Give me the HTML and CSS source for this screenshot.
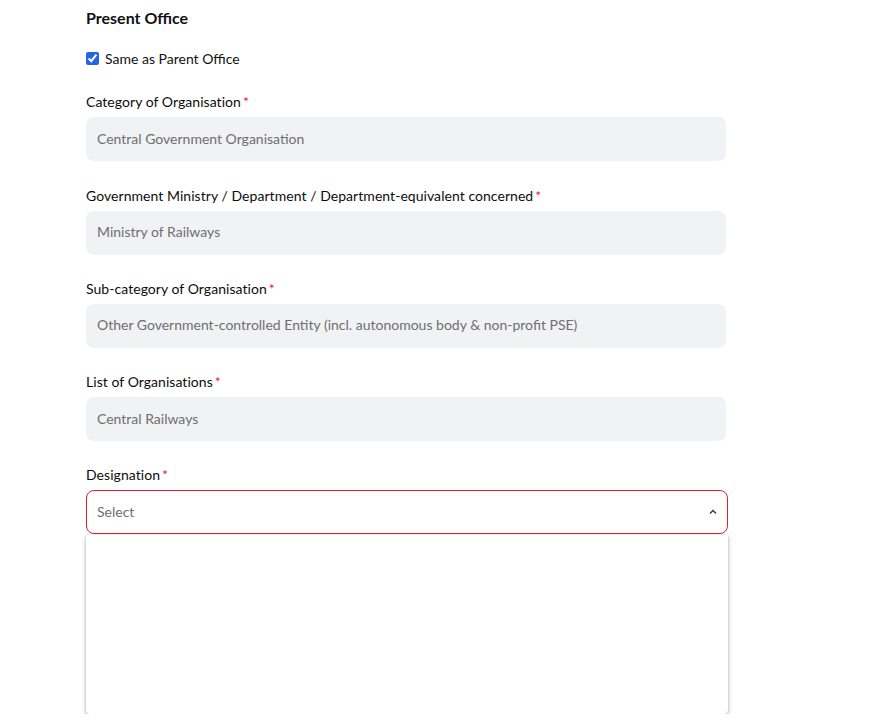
FILE: index.html
```html
<!DOCTYPE html>
<html>
<head>
<meta charset="utf-8">
<link rel="stylesheet" href="styles.css">
</head>
<body>
<div class="page">
  <h2 class="title">Present Office</h2>
  <label class="check">
    <input type="checkbox" checked>
    <span>Same as Parent Office</span>
  </label>

  <div class="field">
    <div class="label">Category of Organisation<span class="req">*</span></div>
    <div class="input">Central Government Organisation</div>
  </div>
  <div class="field">
    <div class="label">Government Ministry / Department / Department-equivalent concerned<span class="req">*</span></div>
    <div class="input">Ministry of Railways</div>
  </div>
  <div class="field">
    <div class="label">Sub-category of Organisation<span class="req">*</span></div>
    <div class="input">Other Government-controlled Entity (incl. autonomous body &amp; non-profit PSE)</div>
  </div>
  <div class="field">
    <div class="label">List of Organisations<span class="req">*</span></div>
    <div class="input">Central Railways</div>
  </div>
  <div class="field select-field">
    <div class="label">Designation<span class="req">*</span></div>
    <div class="select">
      <span>Select</span>
      <svg class="chev" width="8" height="6" viewBox="0 0 8 6"><path d="M1 4.5 L4 1.5 L7 4.5" fill="none" stroke="#333" stroke-width="1.3"/></svg>
    </div>
    <div class="menu"></div>
  </div>
</div>
</body>
</html>
```

FILE: styles.css
```css
html, body {
  margin: 0;
  padding: 0;
  background: #fff;
}
body {
  font-family: Lato, "Open Sans", sans-serif;
  color: #111;
  font-size: 14px;
}
.page {
  padding-left: 86px;
  padding-top: 8px;
  width: 642px;
}
.title {
  font-size: 16px;
  font-weight: 700;
  margin: 0;
  line-height: 20px;
  color: #111;
}
.check {
  display: flex;
  align-items: center;
  gap: 6px;
  margin-top: 20px;
  height: 20px;
  font-size: 14px;
}
.check input {
  margin: 0;
  width: 13px;
  height: 13px;
  accent-color: #2563eb;
}
.field {
  margin-top: 24.3px;
}
.label {
  line-height: 20px;
  font-size: 14px;
  margin-bottom: 5px;
  color: #0d0d0d;
  letter-spacing: 0.05px;
}
.req {
  color: #e0283a;
  margin-left: 2px;
}
.input {
  width: 640px;
  height: 44px;
  box-sizing: border-box;
  background: #f1f2f4;
  border-radius: 8px;
  padding: 0 11px 2px;
  display: flex;
  align-items: center;
  color: #6e6e72;
  font-size: 14px;
}
.select-field {
  position: relative;
}
.select {
  width: 642px;
  height: 44px;
  box-sizing: border-box;
  border: 1px solid #e0212b;
  border-radius: 8px;
  padding: 0 10px 1px;
  display: flex;
  align-items: center;
  justify-content: space-between;
  color: #6e6e72;
}
.chev {
  margin-right: 0;
}
.menu {
  margin-top: 1px;
  width: 642px;
  height: 179px;
  background: #fff;
  border-radius: 0 0 4px 4px;
  box-shadow: 0 2px 4px rgba(0,0,0,0.3), 0 0 2px rgba(0,0,0,0.15);
}
```
